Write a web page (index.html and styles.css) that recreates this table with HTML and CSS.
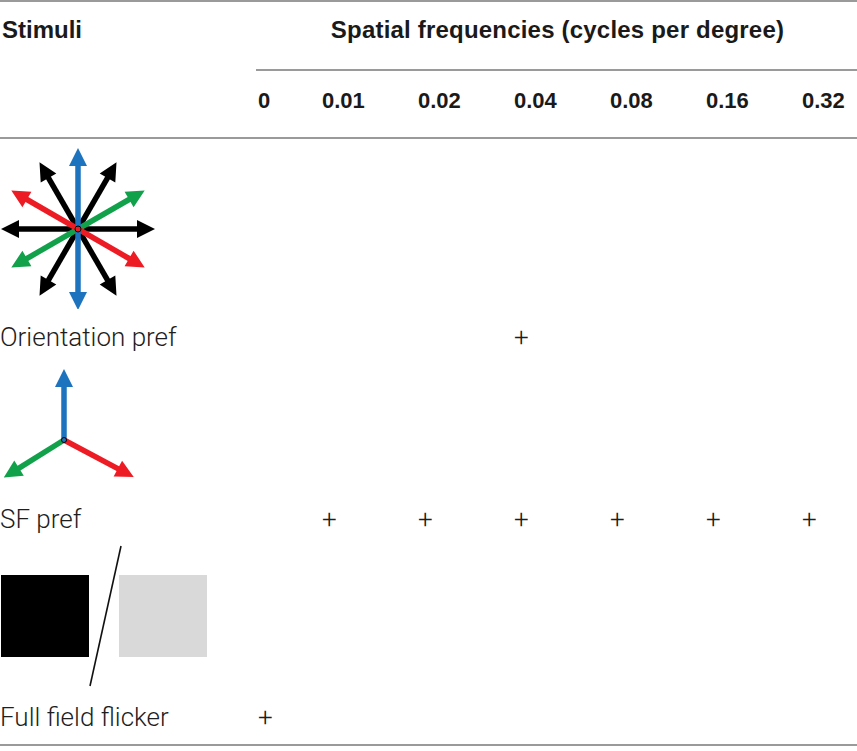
FILE: index.html
```html
<!DOCTYPE html>
<html lang="en">
<head>
<meta charset="utf-8">
<title>Stimuli and spatial frequencies</title>
<link rel="stylesheet" href="styles.css">
</head>
<body>
<table class="tbl">
  <colgroup>
    <col class="c-stim">
    <col class="c-zero">
    <col class="c-f">
    <col class="c-f">
    <col class="c-f">
    <col class="c-f">
    <col class="c-f">
    <col class="c-last">
  </colgroup>
  <thead>
    <tr class="h1">
      <th class="stim-h">Stimuli</th>
      <th class="sf-h" colspan="7">Spatial frequencies (cycles per degree)</th>
    </tr>
    <tr class="h2">
      <th></th>
      <th>0</th>
      <th>0.01</th>
      <th>0.02</th>
      <th>0.04</th>
      <th>0.08</th>
      <th>0.16</th>
      <th>0.32</th>
    </tr>
  </thead>
  <tbody>
    <tr>
      <td class="stim">
        <svg class="icon icon-ori" width="160" height="165" viewBox="0 0 160 165">
          <defs>
            <g id="dbl">
              <path d="M-60 0 H60" stroke="currentColor" stroke-width="5.5"/>
              <path d="M-77 0 L-59 -9 L-59 9 Z M77 0 L59 -9 L59 9 Z" fill="currentColor"/>
            </g>
            <g id="dblv">
              <path d="M-64 0 H64" stroke="currentColor" stroke-width="5.5"/>
              <path d="M-81 0 L-63 -9 L-63 9 Z M81 0 L63 -9 L63 9 Z" fill="currentColor"/>
            </g>
          </defs>
          <use href="#dbl" class="a-black" transform="translate(78 85)"/>
          <use href="#dbl" class="a-black" transform="translate(78 85) rotate(60)"/>
          <use href="#dbl" class="a-black" transform="translate(78 85) rotate(-60)"/>
          <use href="#dbl" class="a-green" transform="translate(78 85) rotate(-30)"/>
          <use href="#dbl" class="a-red" transform="translate(78 85) rotate(30)"/>
          <use href="#dblv" class="a-blue" transform="translate(78 85) rotate(90)"/>
          <circle cx="78" cy="85" r="3" fill="#ed1c24" stroke="#000" stroke-width="1"/>
        </svg>
        <div class="label">Orientation pref</div>
      </td>
      <td class="mark"></td>
      <td class="mark"></td>
      <td class="mark"></td>
      <td class="mark">+</td>
      <td class="mark"></td>
      <td class="mark"></td>
      <td class="mark"></td>
    </tr>
    <tr>
      <td class="stim">
        <svg class="icon icon-sf" width="140" height="129" viewBox="0 0 140 129">
          <g class="a-blue" transform="translate(64 78) rotate(-90)">
            <path d="M0 0 H54" stroke="currentColor" stroke-width="5.5"/>
            <path d="M71 0 L53 -9 L53 9 Z" fill="currentColor"/>
          </g>
          <g class="a-green" transform="translate(64 78) rotate(148)">
            <path d="M0 0 H54" stroke="currentColor" stroke-width="5.5"/>
            <path d="M71 0 L53 -9 L53 9 Z" fill="currentColor"/>
          </g>
          <g class="a-red" transform="translate(64 78) rotate(28)">
            <path d="M0 0 H62" stroke="currentColor" stroke-width="5.5"/>
            <path d="M79 0 L61 -9 L61 9 Z" fill="currentColor"/>
          </g>
          <circle cx="64" cy="78" r="2.5" fill="#1e73be" stroke="#000" stroke-width="1"/>
        </svg>
        <div class="label">SF pref</div>
      </td>
      <td class="mark"></td>
      <td class="mark">+</td>
      <td class="mark">+</td>
      <td class="mark">+</td>
      <td class="mark">+</td>
      <td class="mark">+</td>
      <td class="mark">+</td>
    </tr>
    <tr class="last">
      <td class="stim">
        <svg class="icon icon-flicker" width="210" height="145" viewBox="0 0 210 145">
          <rect x="1" y="31" width="88" height="82" fill="#000"/>
          <rect x="119" y="31" width="88" height="82" fill="#d9d9d9"/>
          <path d="M121 2 L90 142" stroke="#111" stroke-width="1.6"/>
        </svg>
        <div class="label">Full field flicker</div>
      </td>
      <td class="mark">+</td>
      <td class="mark"></td>
      <td class="mark"></td>
      <td class="mark"></td>
      <td class="mark"></td>
      <td class="mark"></td>
      <td class="mark"></td>
    </tr>
  </tbody>
</table>
</body>
</html>
```
FILE: styles.css
```css
html, body {
  margin: 0;
  padding: 0;
  background: #fff;
}

.tbl {
  width: 857px;
  table-layout: fixed;
  border-collapse: separate;
  border-spacing: 0;
  border-top: 2px solid #9a9a9a;
}

.c-stim { width: 256px; }
.c-zero { width: 64px; }
.c-f { width: 96px; }
.c-last { width: 57px; }

.tbl th {
  font-family: "Liberation Sans", Arial, sans-serif;
  font-weight: 700;
  font-size: 22px;
  line-height: 26px;
  color: #1a1a1a;
  text-align: left;
  vertical-align: top;
  padding: 0 0 0 2px;
  white-space: nowrap;
}

.h1 th {
  font-size: 24px;
  padding-top: 15px;
  padding-bottom: 26px;
}

.h1 .stim-h {
  padding-left: 2px;
}

.h1 .sf-h {
  text-align: center;
  letter-spacing: 0.2px;
  border-bottom: 2px solid #9a9a9a;
}

.h2 th {
  padding-top: 17px;
  padding-bottom: 23px;
  border-bottom: 2px solid #9a9a9a;
}

.tbl td {
  font-family: Roboto, "Liberation Sans", sans-serif;
  font-weight: 300;
  font-size: 26px;
  line-height: 30px;
  color: #1e1e1e;
  padding: 5px 0 5px 2px;
  vertical-align: bottom;
}

.tbl td.stim {
  padding-left: 0;
}

.tbl .last td {
  padding-bottom: 12px;
  border-bottom: 2px solid #9a9a9a;
}

.icon {
  display: block;
}

.label {
  margin-top: 13px;
  white-space: nowrap;
}

.a-black { color: #000; }
.a-green { color: #12a14b; }
.a-red { color: #ed1c24; }
.a-blue { color: #1e73be; }
```
